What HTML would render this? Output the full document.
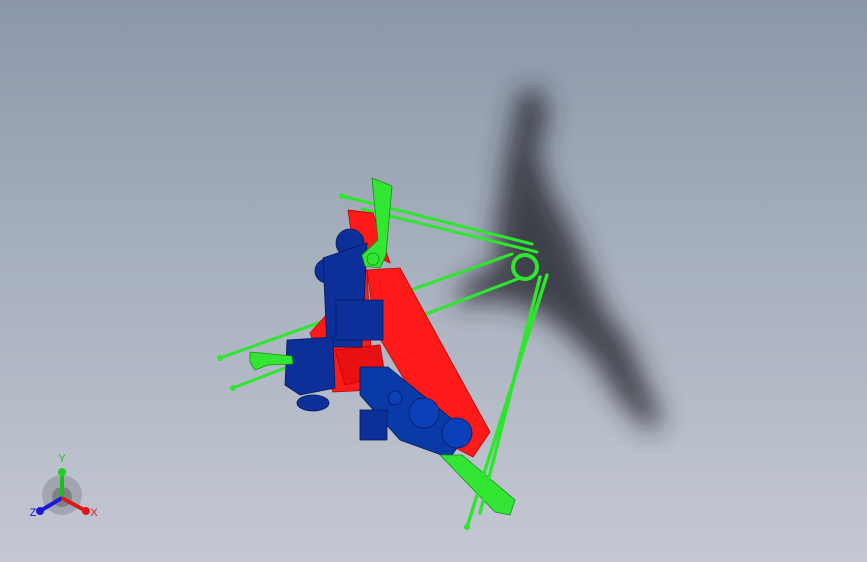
<!DOCTYPE html>
<html><head><style>
html,body{margin:0;padding:0;}
body{width:867px;height:562px;overflow:hidden;background:linear-gradient(180deg,#8b98aa 0%,#a6afbd 45%,#c4c8d3 100%);}
svg{position:absolute;left:0;top:0;}
</style></head><body>
<svg width="867" height="562" viewBox="0 0 867 562" xmlns="http://www.w3.org/2000/svg">
<defs>
<filter id="b" x="-50%" y="-50%" width="200%" height="200%"><feGaussianBlur stdDeviation="13"/></filter>
</defs>
<g filter="url(#b)" fill="#25282e" opacity="0.8">
<path d="M518 92 L542 88 L548 118 L538 150 L550 190 L572 230 L588 270 L605 310 L628 340 L645 380 L662 420 L650 432 L620 402 L595 362 L565 332 L540 314 L500 300 L455 305 L465 282 L498 262 L494 230 L500 200 L505 160 L512 130 Z"/>
</g>
<g stroke="#2ee62e" stroke-width="3" fill="none" stroke-linecap="round">
<line x1="220" y1="358" x2="512" y2="254"/>
<line x1="233" y1="388" x2="520" y2="278"/>
<line x1="342" y1="196" x2="532" y2="244"/>
<line x1="362" y1="209" x2="537" y2="252"/>
</g>
<g fill="#ff1a1a" stroke="#b00" stroke-width="0.8">
<path d="M310 333 L367 270 L373 390 L333 392 Z"/>
<path d="M348 210 L373 213 L390 263 L353 245 Z"/>
<path d="M367 270 L400 268 L490 432 L473 457 L440 440 L375 330 Z"/>
<path d="M335 350 L380 345 L385 375 L345 385 Z" fill="#e81010"/>
</g>
<g fill="#0c2f9a" stroke="#061a5c" stroke-width="0.8">
<circle cx="350" cy="243" r="14"/>
<circle cx="327" cy="271" r="12"/>
<path d="M323 258 L367 243 L362 347 L327 347 Z"/>
<rect x="336" y="300" width="47" height="40"/>
<path d="M287 340 L333 337 L335 388 L300 395 L285 385 Z"/>
<ellipse cx="313" cy="403" rx="16" ry="8"/>
<path d="M360 367 L388 367 L468 432 L450 458 L400 440 L360 395 Z" fill="#0a3aa8"/>
<rect x="360" y="410" width="27" height="30"/>
<circle cx="424" cy="413" r="15" fill="#0b40b8"/>
<circle cx="457" cy="433" r="15" fill="#0b40b8"/>
<circle cx="395" cy="398" r="7" fill="#0b40b8"/>
</g>
<g fill="#33e633" stroke="#159015" stroke-width="0.8">
<path d="M372 178 L392 186 L386 255 L380 268 L365 266 L362 255 L378 240 Z"/>
<circle cx="373" cy="259" r="6"/>
<path d="M250 352 L292 356 L293 364 L268 365 L255 370 L250 362 Z"/>
<path d="M440 455 L462 455 L515 500 L510 515 L495 512 Z"/>
<circle cx="525" cy="267" r="12" fill="none" stroke="#2ee62e" stroke-width="4"/>
</g>
<g stroke="#2ee62e" stroke-width="3.5" fill="none" stroke-linecap="round">
<line x1="547" y1="275" x2="467" y2="527"/>
<line x1="540" y1="277" x2="480" y2="513"/>
</g>
<g fill="#2ee62e"><circle cx="220" cy="358" r="3"/><circle cx="233" cy="388" r="3"/><circle cx="342" cy="196" r="3"/><circle cx="467" cy="527" r="3"/></g>
<circle cx="62" cy="495" r="20" fill="#8a8e98" opacity="0.55"/>
<circle cx="62" cy="497" r="10" fill="#555" opacity="0.45"/>
<line x1="62" y1="498" x2="62" y2="472" stroke="#18c018" stroke-width="4"/>
<circle cx="62" cy="472" r="4" fill="#1ed21e"/>
<line x1="62" y1="498" x2="40" y2="511" stroke="#1a1ad8" stroke-width="4"/>
<circle cx="40" cy="511" r="4" fill="#1a1ad8"/>
<line x1="62" y1="498" x2="86" y2="511" stroke="#e01818" stroke-width="4"/>
<circle cx="86" cy="511" r="4" fill="#e01818"/>
<text x="62" y="462" font-family="Liberation Sans,sans-serif" font-size="11" fill="#18c018" text-anchor="middle">Y</text>
<text x="33" y="516" font-family="Liberation Sans,sans-serif" font-size="11" fill="#1a1ad8" text-anchor="middle">Z</text>
<text x="94" y="516" font-family="Liberation Sans,sans-serif" font-size="11" fill="#e01818" text-anchor="middle">X</text>
</svg>
</body></html>
